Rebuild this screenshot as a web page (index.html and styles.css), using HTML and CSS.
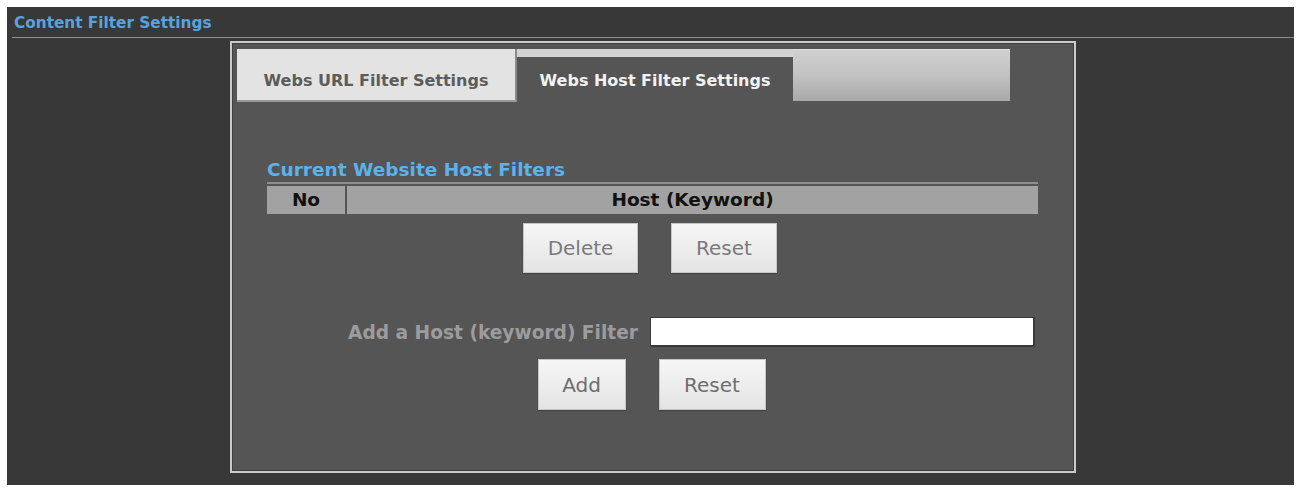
FILE: index.html
```html
<!DOCTYPE html>
<html lang="en">
<head>
    <meta charset="UTF-8">
    <meta name="viewport" content="width=device-width, initial-scale=1.0">
    <title>Content Filter Settings</title>
    <link rel="stylesheet" href="styles.css">
</head>
<body>

    <div class="page">
        <div class="panel">
            <h2 class="panel-title"><span>Content Filter Settings</span></h2>

            <div class="filter-box">
                <!-- Tab strip: URL filter / Host filter -->
                <div class="tabs">
                    <div class="tab">Webs URL Filter Settings</div>
                    <div class="tab active">Webs Host Filter Settings</div>
                    <div class="tab blank"></div>
                </div>

                <div class="section">
                    <h3 class="section-title">Current Website Host Filters</h3>

                    <div class="host-table">
                        <div class="col-no">No</div>
                        <div class="col-host">Host (Keyword)</div>
                    </div>

                    <div class="btn-row">
                        <button class="btn btn-delete">Delete</button>
                        <button class="btn btn-reset">Reset</button>
                    </div>

                    <div class="add-row">
                        <label for="hostKeyword">Add a Host (keyword) Filter</label>
                        <input type="text" id="hostKeyword">
                    </div>

                    <div class="btn-row btn-row-add">
                        <button class="btn btn-add">Add</button>
                        <button class="btn btn-reset2">Reset</button>
                    </div>
                </div>
            </div>
        </div>
    </div>

</body>
</html>
```

FILE: styles.css
```css
/* Router admin - content filter page */
* {
    box-sizing: border-box;
}

body {
    margin: 0;
    background: #fff;
    font-family: "DejaVu Sans", Verdana, sans-serif;
}

.page {
    padding: 7px 4px 5px 7px;
}

.panel {
    background: #383838;
    height: 478px;
}

.panel-title {
    margin: 0 0 0 5px;
    padding: 7px 0 5px 2px;
    line-height: 18px;
    font-size: 15.3px;
    font-weight: bold;
    color: #5aa2dc;
    border-bottom: 1px solid #8e8e8e;
}

.filter-box {
    margin: 3px 0 0 223px;
    width: 846px;
    height: 432px;
    background: #555;
    border: 2px solid #cacaca;
    box-shadow: inset 0 0 0 1px #404040;
}

/* Tabs */
.tabs {
    display: flex;
    align-items: flex-start;
    margin: 6px 0 0 5px;
}

.tab {
    display: flex;
    align-items: center;
    justify-content: center;
    height: 53px;
    padding-top: 12px;
    font-size: 16px;
    font-weight: bold;
}

.tab:first-child {
    width: 280px;
    background: #e3e3e3;
    color: #5c5c5c;
    border-right: 2px solid #8a8a8a;
    border-bottom: 2px solid #9a9a9a;
}

.tab.active {
    width: 276px;
    height: 55px;
    padding-top: 0;
    border-top: 8px solid #d2d2d2;
    background: #555;
    color: #f2f2f2;
}

.tab.blank {
    width: 217px;
    height: 52px;
    background: linear-gradient(#d0d0d0, #c2c2c2 50%, #a9a9a9);
    border-top: 1px solid #e0e0e0;
}

/* Host filter list */
.section {
    padding: 0 36px 0 35px;
}

.section-title {
    margin: 55px 0 0;
    padding-bottom: 1px;
    line-height: 22px;
    font-size: 18.5px;
    font-weight: bold;
    color: #5cb2ea;
    border-bottom: 2px solid #8e8e8e;
}

.host-table {
    display: flex;
    gap: 2px;
    margin-top: 2px;
    height: 28px;
    font-size: 18.5px;
    font-weight: bold;
    color: #111;
}

.host-table div {
    background: #a2a2a2;
    line-height: 28px;
    text-align: center;
}

.col-no {
    width: 78px;
}

.col-host {
    flex: 1;
}

.btn-row {
    display: flex;
    justify-content: center;
    gap: 33px;
    margin-top: 9px;
    padding-right: 5px;
}

.btn {
    height: 50px;
    padding: 0;
    font-family: inherit;
    font-size: 20px;
    color: #7a7a7a;
    background: linear-gradient(#f6f6f6, #e4e4e4);
    border: 1px solid #c6c6c6;
    box-shadow: 0 1px 1px #444;
}

.btn-delete { width: 115px; }
.btn-reset { width: 106px; }

.add-row {
    display: flex;
    justify-content: flex-end;
    align-items: center;
    gap: 12px;
    margin-top: 44px;
    padding-right: 3px;
}

.add-row label {
    font-size: 18.6px;
    font-weight: bold;
    color: #9c9c9c;
}

.add-row input {
    width: 385px;
    height: 30px;
    margin: 0;
    background: #fff;
    border: 1px solid #3a3a3a;
    border-width: 1px 2px 2px 1px;
}

.btn-row-add {
    margin-top: 12px;
    padding-right: 2px;
}

.btn-row-add .btn {
    height: 51px;
    color: #6e6e6e;
}

.btn-add { width: 88px; }
.btn-reset2 { width: 107px; }
```
